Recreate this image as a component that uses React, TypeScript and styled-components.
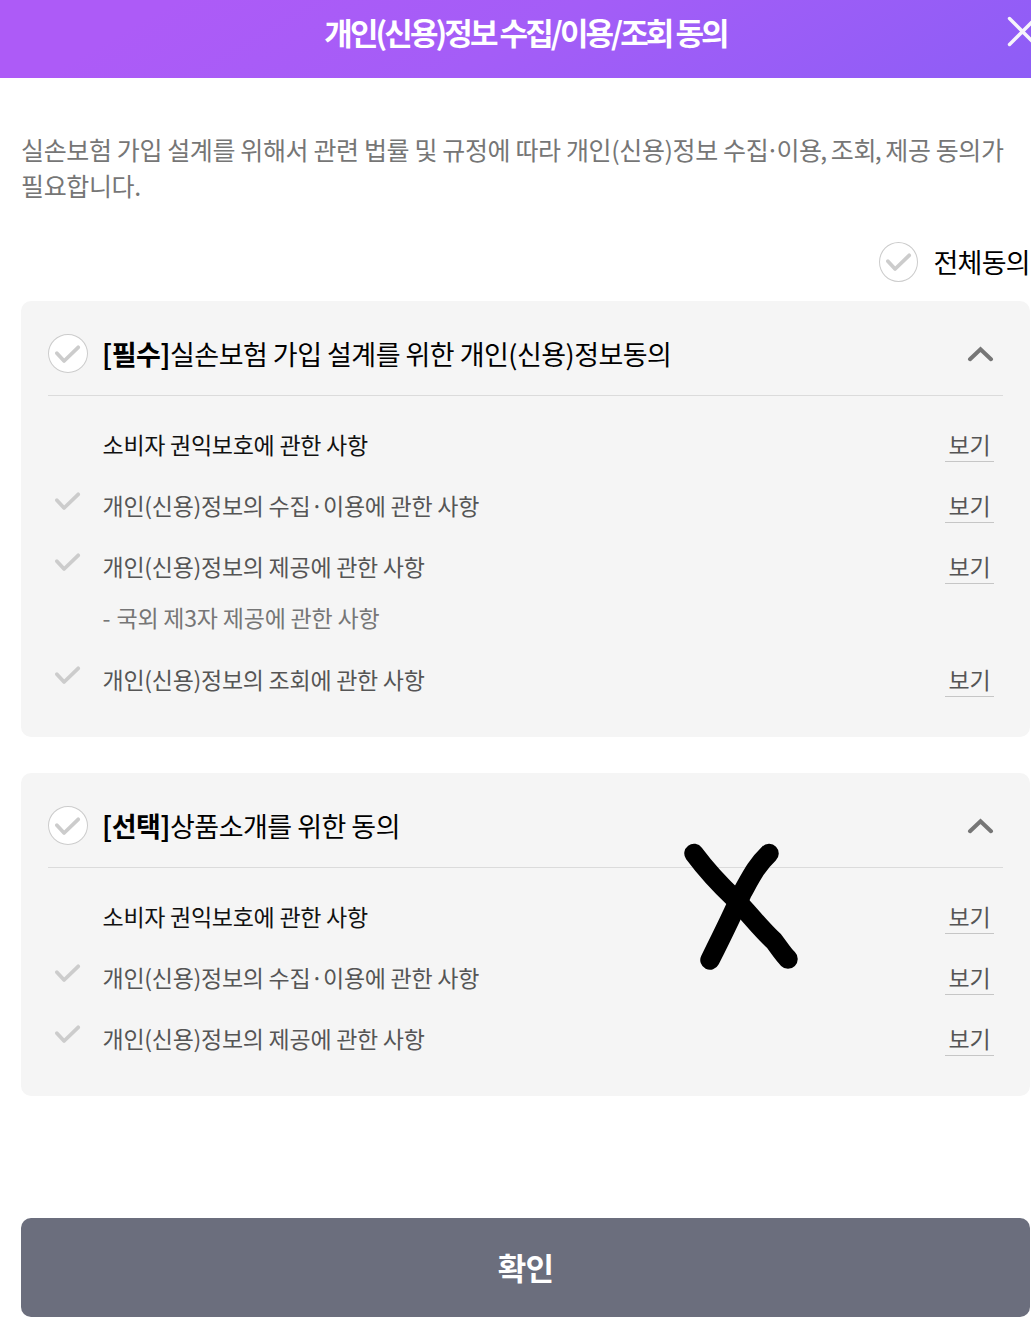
import React from "react";
import styled, { createGlobalStyle } from "styled-components";

const GlobalStyle = createGlobalStyle`
  *, *::before, *::after { box-sizing: border-box; }
  html, body { margin: 0; padding: 0; background: #fff; }
  body {
    font-family: "Noto Sans CJK KR", "Noto Sans", sans-serif;
    color: #000;
    overflow: hidden;
  }
`;

const Page = styled.div`
  width: 1031px;
  height: 1322px;
  display: flex;
  flex-direction: column;
  position: relative;
  overflow: hidden;
`;

const Header = styled.header`
  height: 78px;
  flex: none;
  display: flex;
  align-items: center;
  justify-content: center;
  position: relative;
  padding: 0 0 15px 20px;
  background: linear-gradient(150deg, #ad5bf7 15%, #a45df7 50%, #8e5df6 100%);
`;

const Title = styled.h1`
  margin: 0;
  font-size: 31px;
  line-height: 45px;
  font-weight: 700;
  letter-spacing: -2.92px;
  color: #fff;
  white-space: nowrap;
`;

const CloseButton = styled.button`
  position: absolute;
  top: 16px;
  left: 1006px;
  width: 32px;
  height: 32px;
  padding: 0;
  border: 0;
  background: none;
  svg { display: block; }
`;

const Main = styled.main`
  flex: 1;
  display: flex;
  flex-direction: column;
  padding: 53px 1px 5px 21px;
`;

const Intro = styled.p`
  margin: 0;
  height: 72px;
  font-size: 25px;
  line-height: 36px;
  letter-spacing: -0.37px;
  color: #767676;
  white-space: nowrap;
`;

const Tight = styled.span`
  letter-spacing: -3.2px;
`;

const CommaTight = styled.span`
  letter-spacing: -1.7px;
`;

const AgreeAll = styled.div`
  display: flex;
  justify-content: flex-end;
  align-items: center;
  gap: 15px;
  height: 40px;
  margin: 39px 0 19px;
`;

const AgreeAllLabel = styled.span`
  font-size: 27px;
  line-height: 40px;
  letter-spacing: -0.7px;
`;

const Circle = styled.span<{ $w?: number; $h?: number }>`
  width: ${(p) => p.$w ?? 40}px;
  height: ${(p) => p.$h ?? 40}px;
  flex: none;
  border: 1px solid #ccc;
  border-radius: 50%;
  background: #fff;
  display: flex;
  align-items: center;
  justify-content: center;
`;

const Card = styled.section`
  background: #f5f5f5;
  border-radius: 10px;
  padding: 0 27px 26px;
  & + & { margin-top: 36px; }
`;

const CardHeader = styled.div`
  display: flex;
  align-items: center;
  height: 95px;
  padding-top: 11px;
  border-bottom: 1px solid #dbdbdb;
  margin-bottom: 19px;
`;

const CardTitle = styled.h2`
  flex: 1;
  margin: 0 0 0 14px;
  font-size: 27px;
  line-height: 40px;
  font-weight: 400;
  letter-spacing: -0.52px;
  white-space: nowrap;
  strong { font-weight: 700; }
`;

const Chevron = styled.svg`
  flex: none;
  margin: 1px 9px 0 0;
`;

const Row = styled.div`
  display: flex;
  align-items: center;
  height: 61px;
  padding-right: 9px;
`;

const CheckSlot = styled.span`
  width: 40px;
  height: 30px;
  margin-right: 14.5px;
  padding-bottom: 12px;
  display: flex;
  align-items: center;
  justify-content: center;
`;

const RowLabel = styled.span<{ $strong?: boolean }>`
  flex: 1;
  padding-bottom: 4px;
  font-size: 23px;
  line-height: 34px;
  letter-spacing: -0.27px;
  color: ${(p) => (p.$strong ? "#111" : "#555")};
  white-space: nowrap;
`;

const SubRow = styled.div`
  height: 52px;
  padding-left: 54.5px;
  font-size: 23px;
  line-height: 39px;
  letter-spacing: -0.2px;
  color: #767676;
`;

const Dash = styled.span`
  letter-spacing: 1px;
`;

const ViewLink = styled.a`
  width: 49px;
  height: 33px;
  border-bottom: 1px solid #c6c6c6;
  text-align: center;
  font-size: 23px;
  line-height: 31px;
  letter-spacing: -0.25px;
  color: #555;
`;

const Confirm = styled.button`
  margin-top: auto;
  height: 99px;
  flex: none;
  border: 0;
  border-radius: 10px;
  padding: 0 0 2px;
  background: #6b6e7d;
  color: #fff;
  font-family: inherit;
  font-size: 31px;
  font-weight: 700;
  letter-spacing: -0.8px;
`;

const Scribble = styled.svg`
  position: absolute;
  left: 680px;
  top: 840px;
`;

const CheckIcon = () => (
  <svg width="26" height="20" viewBox="0 0 26 20" fill="none">
    <path d="M1.9 9.2 9.1 17 23.2 3.3" stroke="#ccc" strokeWidth="3.7" strokeLinecap="round" strokeLinejoin="round" />
  </svg>
);

type Item = { label: string; strong?: boolean; sub?: string };

const consumer: Item = { label: "소비자 권익보호에 관한 사항", strong: true };
const collect: Item = { label: "개인(신용)정보의 수집·이용에 관한 사항" };

const sections: { tag: string; title: string; items: Item[] }[] = [
  {
    tag: "[필수]",
    title: "실손보험 가입 설계를 위한 개인(신용)정보동의",
    items: [
      consumer,
      collect,
      { label: "개인(신용)정보의 제공에 관한 사항", sub: "국외 제3자 제공에 관한 사항" },
      { label: "개인(신용)정보의 조회에 관한 사항" },
    ],
  },
  {
    tag: "[선택]",
    title: "상품소개를 위한 동의",
    items: [consumer, collect, { label: "개인(신용)정보의 제공에 관한 사항" }],
  },
];

export default function App() {
  return (
    <Page>
      <GlobalStyle />
      <Header>
        <Title>개인(신용)정보 수집/이용/조회 동의</Title>
        <CloseButton aria-label="닫기">
          <svg width="32" height="32" viewBox="0 0 32 32" fill="none">
            <path d="M3.5 2.5 29.5 28.5M29.5 2.5 3.5 28.5" stroke="#f6f4fb" strokeWidth="3.4" strokeLinecap="round" />
          </svg>
        </CloseButton>
      </Header>
      <Main>
        <Intro>
          실손보험 가입 설계를 위해서 관련 법률 및 규정에 따라 개인(신용)정보 수<Tight>집·</Tight>이<CommaTight>용,</CommaTight> 조<CommaTight>회,</CommaTight> 제공 동의가
          <br />
          필요합니다.
        </Intro>
        <AgreeAll>
          <Circle $w={39}><CheckIcon /></Circle>
          <AgreeAllLabel>전체동의</AgreeAllLabel>
        </AgreeAll>
        {sections.map((s) => (
          <Card key={s.tag}>
            <CardHeader>
              <Circle $h={39}><CheckIcon /></Circle>
              <CardTitle><strong>{s.tag}</strong>{s.title}</CardTitle>
              <Chevron width="27" height="16" viewBox="0 0 27 16" fill="none">
                <path d="M3 13.2 13.5 3.2 24 13.2" stroke="#767676" strokeWidth="4" strokeLinecap="round" strokeLinejoin="miter" />
              </Chevron>
            </CardHeader>
            {s.items.map((item) => (
              <React.Fragment key={item.label}>
                <Row>
                  <CheckSlot>{!item.strong && <CheckIcon />}</CheckSlot>
                  <RowLabel $strong={item.strong}>{item.label}</RowLabel>
                  <ViewLink>보기</ViewLink>
                </Row>
                {item.sub && <SubRow><Dash>-</Dash> {item.sub}</SubRow>}
              </React.Fragment>
            ))}
          </Card>
        ))}
        <Confirm>확인</Confirm>
      </Main>
      <Scribble width="122" height="134" viewBox="0 0 122 134" fill="none" stroke="#000" strokeWidth="19.5" strokeLinecap="round" strokeLinejoin="round">
        <path d="M14 13.5C27 31 36 41 55 59C73 78 81 89 94 101C100 109 103 114 108 119" />
        <path d="M89 13.5C76 26 71 37 62 53C52 76 42 96 30 120" />
      </Scribble>
    </Page>
  );
}
